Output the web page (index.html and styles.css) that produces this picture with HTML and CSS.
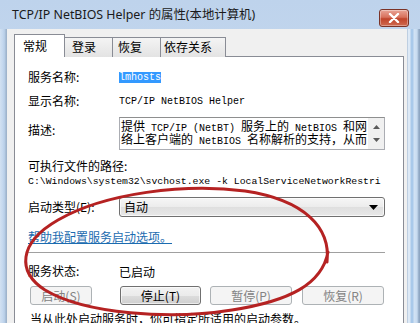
FILE: index.html
```html
<!DOCTYPE html>
<html lang="zh-CN">
<head>
<meta charset="utf-8">
<title>TCP/IP NetBIOS Helper 的属性</title>
<link rel="stylesheet" href="styles.css">
</head>
<body>
<div class="window">
  <div class="titlebar">
    <span class="title">TCP/IP NetBIOS Helper 的属性(本地计算机)</span>
    <div class="close"><svg width="14" height="10" viewBox="0 0 14 10"><path d="M3 1 L11 9 M11 1 L3 9" stroke="#fff" stroke-width="2.4" stroke-linecap="round"/></svg></div>
  </div>
  <div class="main">
    <div class="frame-l"></div>
    <div class="dialog">
      <div class="tabs">
        <div class="tab active t1">常规</div>
        <div class="tab t2">登录</div>
        <div class="tab t3">恢复</div>
        <div class="tab t4">依存关系</div>
      </div>
      <div class="panel">
        <div class="row r1"><span class="label">服务名称:</span><span class="mono sel">lmhosts</span></div>
        <div class="row r2"><span class="label">显示名称:</span><span class="mono">TCP/IP NetBIOS Helper</span></div>
        <div class="row r3">
          <span class="label desc-label">描述:</span>
          <div class="descbox">
            <div class="desctext">
              <div class="dl">提供<span class="mono"> TCP/IP (NetBT) </span>服务上的<span class="mono"> NetBIOS </span>和网</div>
              <div class="dl">络上客户端的<span class="mono"> NetBIOS </span>名称解析的支持，从而</div>
            </div>
            <div class="scroll">
              <svg width="7" height="4" viewBox="0 0 7 4"><path d="M0 4 L3.5 0 L7 4 Z" fill="#5a5a5a"/></svg>
              <svg width="7" height="4" viewBox="0 0 7 4"><path d="M0 0 L3.5 4 L7 0 Z" fill="#5a5a5a"/></svg>
            </div>
          </div>
        </div>
        <div class="line pathlabel">可执行文件的路径:</div>
        <div class="line mono path">C:\Windows\system32\svchost.exe -k LocalServiceNetworkRestri</div>
        <div class="row r4">
          <span class="label">启动类型(E):</span>
          <div class="combo"><span>自动</span><svg width="9" height="5" viewBox="0 0 9 5"><path d="M0 0 L9 0 L4.5 5 Z" fill="#000"/></svg></div>
        </div>
        <div class="line link">帮助我配置服务启动选项。</div>
        <div class="sep"></div>
        <div class="row r5"><span class="label">服务状态:</span><span>已启动</span></div>
        <div class="buttons">
          <div class="btn disabled b1">启动(S)</div>
          <div class="btn b2">停止(T)</div>
          <div class="btn disabled b3">暂停(P)</div>
          <div class="btn disabled b4">恢复(R)</div>
        </div>
        <div class="line bottom">当从此处启动服务时，你可指定所适用的启动参数。</div>
      </div>
    </div>
    <div class="frame-r"></div>
  </div>
  <svg class="circle" width="420" height="323" viewBox="0 0 420 323">
    <path d="M327 262 C331 228 305 200 245 191 C185 183 105 193 58 220 C18 243 17 272 45 290 C85 314 170 320 232 310 C290 301 322 284 328 252" fill="none" stroke="#b52222" stroke-width="3" stroke-linecap="round"/>
  </svg>
</div>
</body>
</html>
```

FILE: styles.css
```css
* { box-sizing: border-box; }
html, body { margin: 0; padding: 0; }
body {
  width: 420px;
  height: 323px;
  overflow: hidden;
  font-family: "Noto Sans CJK SC", "Noto Sans", sans-serif;
  font-size: 12px;
  color: #000;
  background: #c9dbef;
}
.window {
  position: relative;
  width: 420px;
  height: 323px;
  display: flex;
  flex-direction: column;
  background: linear-gradient(#bed3ec, #d3e2f3);
}
.titlebar {
  height: 29px;
  display: flex;
  align-items: flex-start;
  padding-left: 12px;
  flex: none;
}
.title {
  font-family: "Noto Sans", "Noto Sans CJK SC", sans-serif;
  font-size: 12.4px;
  line-height: 16px;
  margin-top: 7px;
  color: #1a1a1a;
}
.close {
  margin-left: auto;
  margin-right: 11px;
  margin-top: 9px;
  width: 30px;
  height: 18px;
  border: 1px solid #7b3327;
  border-radius: 3px;
  background: linear-gradient(#e9a597 0%, #d8715c 45%, #c0442b 55%, #cf6a50 100%);
  box-shadow: inset 0 0 0 1px rgba(255,255,255,0.35);
  display: flex;
  align-items: center;
  justify-content: center;
}
.main {
  flex: 1;
  display: flex;
  min-height: 0;
}
.frame-l {
  width: 7px;
  flex: none;
  background: linear-gradient(90deg, #d2e1f1 0, #c3d7ee 3px, #b5cbe4 5px, #9fb4cc 6px, #9fb4cc 7px);
}
.frame-r {
  width: 13px;
  flex: none;
  background: linear-gradient(90deg, #9fb4cc 0, #dde9f6 1px, #dde9f6 3px, #a9c9ea 4px, #a9c9ea 6px, #d3e3f4 7px, #c7dbf0 10px, #8ea6c2 12px, #8ea6c2 13px);
}
.dialog {
  width: 400px;
  flex: none;
  background: #f0f0f0;
  padding: 5px 0 0 7px;
  display: flex;
  flex-direction: column;
}
.tabs {
  display: flex;
  height: 23px;
  align-items: flex-end;
  position: relative;
  z-index: 1;
  margin-bottom: -1px;
}
.tab {
  height: 20px;
  border: 1px solid #898c95;
  border-bottom: none;
  margin-left: -1px;
  background: linear-gradient(#f4f4f4, #e3e3e3);
  line-height: 18px;
  padding-left: 7px;
  color: #000;
}
.tab.active {
  height: 23px;
  background: #fff;
  line-height: 22px;
  margin-left: 0;
  z-index: 2;
  position: relative;
}
.t1 { width: 51px; padding-left: 8px; }
.t2 { width: 49px; padding-left: 7px; }
.t3 { width: 49px; padding-left: 5px; }
.t4 { width: 66px; padding-left: 3px; }
.panel {
  width: 390px;
  flex: 1;
  background: #fff;
  border: 1px solid #898c95;
  border-bottom: none;
  padding: 8px 18px 0 13px;
}
.row {
  display: flex;
  align-items: center;
}
.label {
  width: 91px;
  flex: none;
  line-height: 16px;
}
.mono {
  font-family: "Liberation Mono", monospace;
  font-size: 10px;
  white-space: pre;
}
.r1 { height: 24px; }
.r2 { height: 24px; }
.sel {
  background: #3399ff;
  color: #fff;
  line-height: 11px;
}
.r3 {
  margin-top: 4px;
  align-items: flex-start;
}
.desc-label { padding-top: 5px; }
.descbox {
  width: 267px;
  height: 33px;
  border: 1px solid #abadb3;
  border-top-color: #8e8f8f;
  display: flex;
  background: #fff;
}
.desctext {
  flex: 1;
  padding: 1px 0 0 1px;
  font-size: 12px;
  overflow: hidden;
}
.dl {
  height: 13px;
  line-height: 13px;
  white-space: pre;
}
.desctext .mono { font-size: 10px; line-height: 13px; }
.scroll {
  width: 16px;
  flex: none;
  background: #f0f0f0;
  display: flex;
  flex-direction: column;
  align-items: center;
  justify-content: space-between;
  padding: 7px 0 7px;
}
.line { line-height: 16px; }
.pathlabel { margin-top: 8px; }
.path { font-size: 9.8px; line-height: 16px; white-space: pre; }
.r4 { margin-top: 7px; height: 20px; }
.combo {
  width: 267px;
  height: 20px;
  border: 1px solid #707070;
  border-radius: 3px;
  background: linear-gradient(#f6f6f6 0%, #ececec 50%, #dfdfdf 51%, #e8e8e8 100%);
  box-shadow: inset 0 0 0 1px rgba(255,255,255,0.7);
  display: flex;
  align-items: center;
  justify-content: space-between;
  padding: 0 6px 0 4px;
  line-height: 16px;
}
.link {
  margin-top: 12px;
  color: #1c6cb0;
  text-decoration: underline;
}
.sep {
  margin-top: 7px;
  height: 2px;
  width: 357px;
  border-top: 1px solid #a0a0a0;
  border-bottom: 1px solid #fff;
}
.r5 { margin-top: 9px; height: 16px; }
.buttons {
  margin-top: 7px;
  display: flex;
  padding-left: 2px;
}
.btn {
  height: 19px;
  border: 1px solid #707070;
  border-radius: 3px;
  background: linear-gradient(#f2f2f2 0%, #ebebeb 50%, #dddddd 51%, #cfcfcf 100%);
  box-shadow: inset 0 0 0 1px rgba(255,255,255,0.6);
  display: flex;
  align-items: center;
  justify-content: center;
  line-height: 16px;
}
.btn.disabled {
  border-color: #adb2b5;
  background: #f4f4f4;
  color: #838383;
  box-shadow: none;
}
.b1 { width: 62px; }
.b2 { width: 81px; margin-left: 28px; }
.b3 { width: 82px; margin-left: 9px; }
.b4 { width: 82px; margin-left: 10px; }
.bottom {
  margin-top: 6px;
  padding-left: 2px;
  white-space: nowrap;
}
.circle {
  position: absolute;
  left: 0;
  top: 0;
  pointer-events: none;
}
```
